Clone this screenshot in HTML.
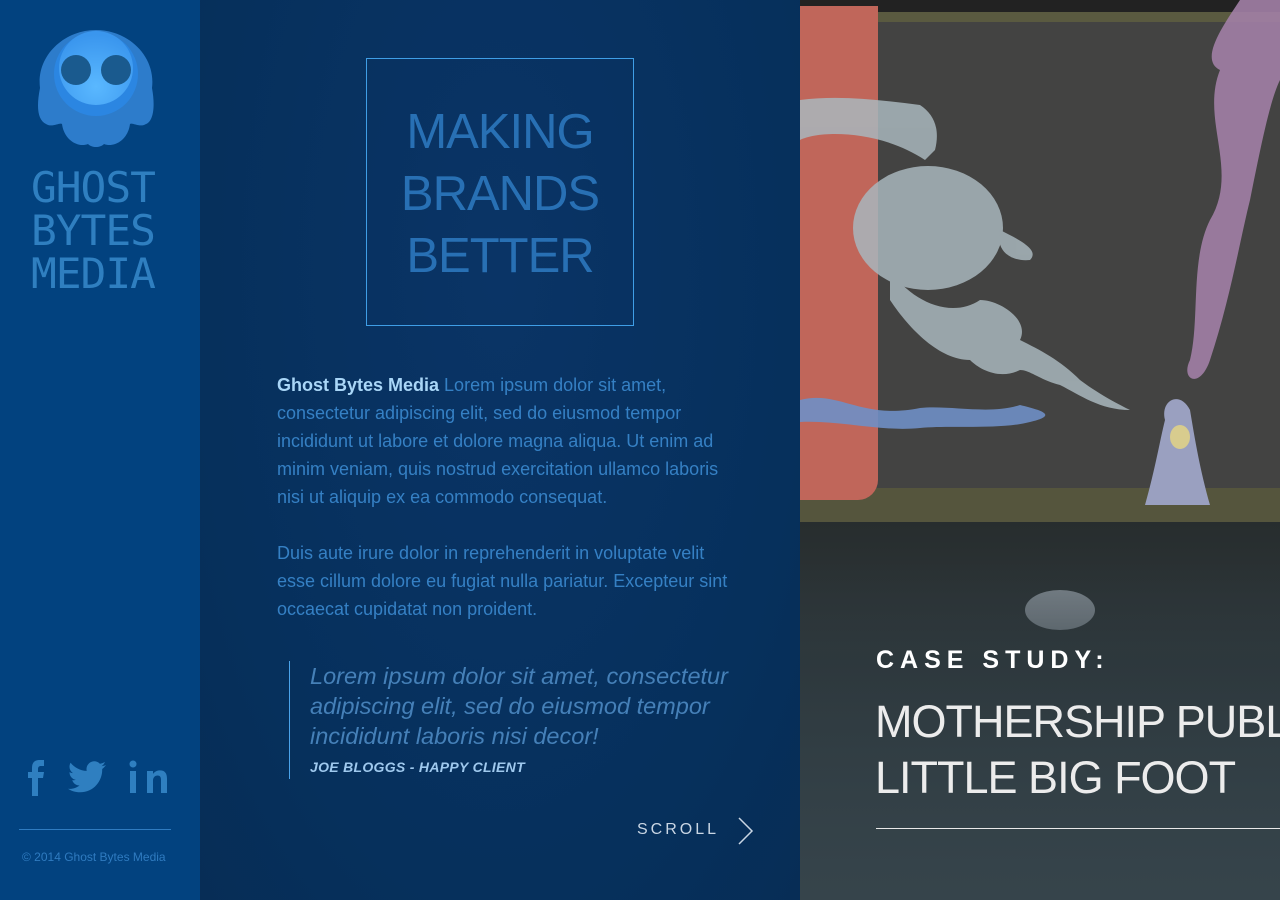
<!DOCTYPE html>
<html><head><meta charset="utf-8"><style>
*{margin:0;padding:0;box-sizing:border-box}
body{width:1280px;height:900px;overflow:hidden;font-family:"Liberation Sans",sans-serif;position:relative;background:#082f5c}
.side{position:absolute;left:0;top:0;width:200px;height:900px;background:#02427f}
.logo{position:absolute;left:31px;top:166px;font-family:"DejaVu Sans Mono","Liberation Mono",monospace;color:#2f7fc0;font-size:42px;line-height:43px;letter-spacing:-1px;transform:scaleX(1.02);transform-origin:left}
.mid{position:absolute;left:200px;top:0;width:600px;height:900px;background:radial-gradient(ellipse at 50% 30%,#0a3466,#06305c 70%,#072d56)}
.box{position:absolute;left:366px;top:58px;width:268px;height:268px;border:1px solid #3f9ee6;text-align:center;color:#2870b4;font-size:49px;line-height:62px;padding-top:42px;letter-spacing:-1px}
.p{position:absolute;left:277px;width:470px;font-size:18px;line-height:28px;color:#3580c4}
.p b{color:#a9d6f7;font-weight:bold}
.quote{position:absolute;left:289px;top:661px;height:118px;border-left:1px solid #4aa3ea;padding-left:20px;width:470px}
.quote i{display:block;font-size:23.5px;line-height:30px;color:#4580b8}
.quote .by{font-size:14px;font-style:italic;font-weight:bold;color:#9fc9ee;letter-spacing:.3px;margin-top:8px}
.scroll{position:absolute;left:637px;top:821px;font-size:16px;letter-spacing:3px;color:#c9d6e4}
.right{position:absolute;left:800px;top:0;width:480px;height:900px;background:#3b3c3b;overflow:hidden}
</style></head><body>
<div class="side">
<svg style="position:absolute;left:34px;top:26px" width="124" height="128" viewBox="0 0 124 124">
<defs><radialGradient id="g" cx="0.5" cy="0.75" r="0.7"><stop offset="0" stop-color="#5ab8ff"/><stop offset="1" stop-color="#3a96ee"/></radialGradient></defs>
<path d="M6 60 C2 28 30 2 62 2 C94 2 122 28 118 60 C122 82 118 94 112 96 C106 100 98 94 96 96 C94 112 80 120 70 116 C66 120 58 120 54 116 C44 120 30 112 28 96 C26 94 18 100 12 96 C4 92 2 80 6 60Z" fill="#2d7ccb"/>
<circle cx="62" cy="46" r="42" fill="#2b86e2"/>
<circle cx="62" cy="40" r="37" fill="url(#g)"/>
<circle cx="42" cy="42" r="15" fill="#1a5a8e"/>
<circle cx="82" cy="42" r="15" fill="#1a5a8e"/>
</svg>
<div class="logo">GHOST<br>BYTES<br>MEDIA</div>
<svg style="position:absolute;left:28px;top:760px" width="142" height="36" viewBox="0 0 142 36" fill="#2f7fc0">
<path d="M4 36V18H0V12H4V8C4 2 7 0 12 0H16V6H13C11 6 10 7 10 9V12H16L15 18H10V36Z"/>
<path d="M78 5c-1.5.7-3 1-4.5 1.2 1.6-1 2.8-2.5 3.4-4.3-1.5.9-3.2 1.5-5 1.9C70.5 2.2 68.5 1.3 66.3 1.3c-4.3 0-7.8 3.5-7.8 7.8 0 .6.1 1.2.2 1.8-6.5-.3-12.3-3.4-16.1-8.2-.7 1.2-1.1 2.5-1.1 3.9 0 2.7 1.4 5.1 3.5 6.5-1.3 0-2.5-.4-3.5-1v.1c0 3.8 2.7 6.9 6.3 7.7-.7.2-1.4.3-2.1.3-.5 0-1 0-1.5-.1 1 3.1 3.9 5.4 7.3 5.4-2.7 2.1-6.1 3.4-9.7 3.4-.6 0-1.3 0-1.9-.1 3.5 2.2 7.6 3.5 12 3.5 14.4 0 22.3-11.9 22.3-22.3v-1C75.6 7.900 77 6.5 78 5z"/>
<rect x="102" y="11" width="6" height="22"/><circle cx="105" cy="4" r="3.5"/>
<path d="M119 11h6v3c1.5-2.3 4-3.6 7-3.6 5 0 7 3 7 8.5V33h-6V20c0-3-1-4.5-3.5-4.5S125 17.5 125 20.5V33h-6z"/>
</svg>
<div style="position:absolute;left:19px;top:829px;width:152px;height:1px;background:#2f7bc0"></div>
<div style="position:absolute;left:22px;top:850px;font-size:12px;color:#2f7bc0">© 2014 Ghost Bytes Media</div>
</div>
<div class="mid"></div>
<div class="box">MAKING<br>BRANDS<br>BETTER</div>
<div class="p" style="top:371px"><b>Ghost Bytes Media</b> Lorem ipsum dolor sit amet, consectetur adipiscing elit, sed do eiusmod tempor incididunt ut labore et dolore magna aliqua. Ut enim ad minim veniam, quis nostrud exercitation ullamco laboris nisi ut aliquip ex ea commodo consequat.</div>
<div class="p" style="top:539px">Duis aute irure dolor in reprehenderit in voluptate velit esse cillum dolore eu fugiat nulla pariatur. Excepteur sint occaecat cupidatat non proident.</div>
<div class="quote"><i>Lorem ipsum dolor sit amet, consectetur adipiscing elit, sed do eiusmod tempor incididunt laboris nisi decor!</i><div class="by">JOE BLOGGS - HAPPY CLIENT</div></div>
<div class="scroll">SCROLL</div>
<svg style="position:absolute;left:737px;top:817px" width="18" height="28"><path d="M2 1L15 14L2 27" stroke="#c9d6e4" stroke-width="1.5" fill="none"/></svg>
<div class="right">
<div style="position:absolute;left:0;top:0;width:480px;height:12px;background:#222"></div>
<div style="position:absolute;left:0;top:12px;width:480px;height:10px;background:#5a5a40"></div>
<div style="position:absolute;left:0;top:22px;width:480px;height:468px;background:#434342"></div>
<div style="position:absolute;left:0;top:488px;width:480px;height:34px;background:#55553d"></div>
<div style="position:absolute;left:0;top:522px;width:480px;height:378px;background:linear-gradient(#272d2e,#2e3639 30%,#37454b)"></div>
<div style="position:absolute;left:0;top:6px;width:78px;height:494px;background:#c0665a;border-radius:0 0 20px 0"></div>
<svg style="position:absolute;left:0;top:0" width="480" height="900">
<g fill="#a9b7bd" opacity="0.85">
<path d="M0 100 C40 95 80 100 120 105 C135 115 140 130 135 150 L125 160 C80 130 20 130 0 140Z"/>
<ellipse cx="128" cy="228" rx="75" ry="62"/>
<path d="M90 270 C110 300 150 320 180 300 C200 300 230 320 220 340 C240 350 260 360 280 380 C300 395 320 405 330 410 C300 410 280 395 260 385 C240 380 230 370 220 370 C200 380 180 370 170 360 C140 360 110 330 90 300Z"/>
<path d="M200 230 C220 240 240 250 230 260 C210 262 195 250 200 230Z"/>
</g>
<path d="M0 400 C40 390 60 420 120 408 C150 405 190 415 220 405 C240 410 260 415 230 422 C200 430 150 425 120 428 C80 432 40 420 0 422Z" fill="#6f8fc5" opacity="0.9"/>
<path d="M440 0 C420 30 400 60 420 70 C400 120 440 170 410 220 C390 260 400 320 390 360 C380 380 400 390 410 360 C430 300 440 240 450 200 C460 150 470 100 480 80 V0Z" fill="#a27fa6" opacity="0.9"/>
<path d="M345 505 C355 470 360 440 365 420 C360 400 380 390 390 410 C395 440 400 470 410 505Z" fill="#9aa0c0"/>
<ellipse cx="380" cy="437" rx="10" ry="12" fill="#d8cc8e"/>
<ellipse cx="260" cy="610" rx="35" ry="20" fill="#b8c2cc" opacity="0.6"/>
</svg>
<div style="position:absolute;left:0;top:560px;width:480px;height:340px;background:linear-gradient(rgba(46,56,60,0),rgba(44,56,62,.6) 30%,#36444b)"></div>
<div style="position:absolute;left:76px;top:646px;color:#fff;font-weight:bold;font-size:25px;letter-spacing:6px">CASE STUDY:</div>
<div style="position:absolute;left:75px;top:694px;color:#ececec;font-size:45px;line-height:56px;white-space:nowrap;letter-spacing:-1px">MOTHERSHIP PUBL<br>LITTLE BIG FOOT</div>
<div style="position:absolute;left:76px;top:828px;width:404px;height:1px;background:#e8e8e8"></div>
</div>
</body></html>
